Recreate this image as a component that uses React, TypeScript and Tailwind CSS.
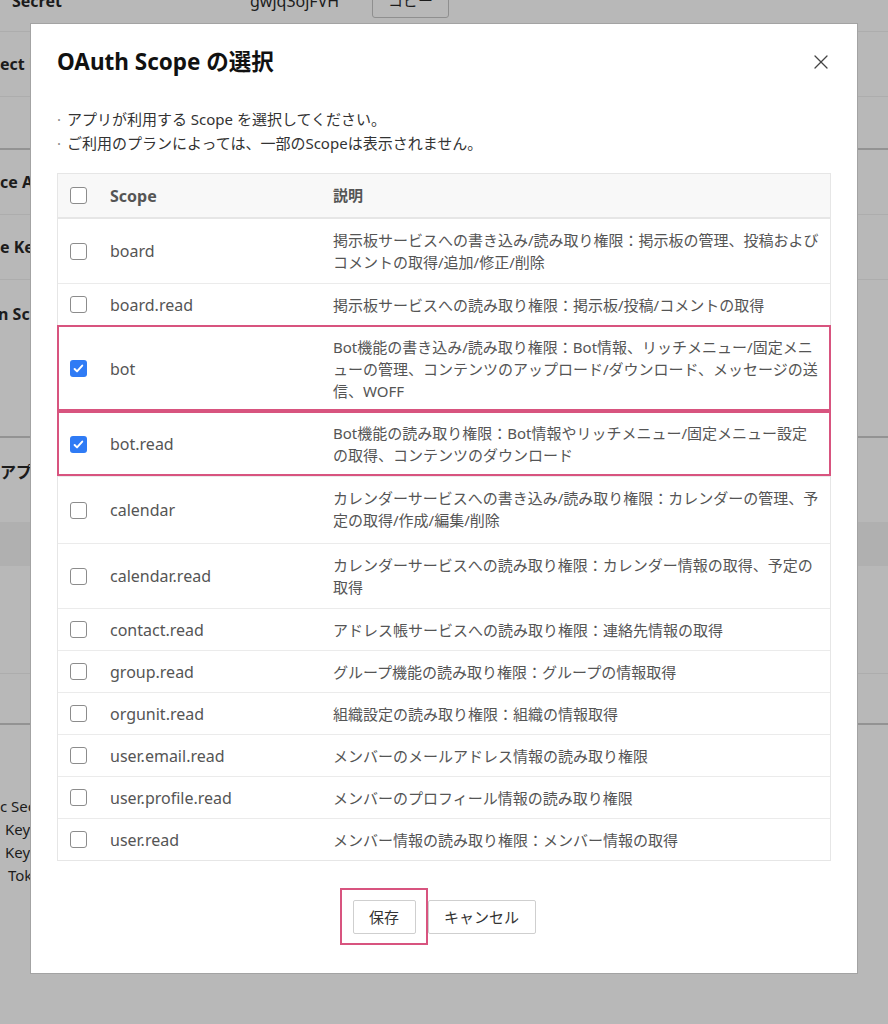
import { X } from 'lucide-react';

type Scope = { name: string; lines: string[]; checked?: boolean };

const SCOPES: Scope[] = [
  { name: 'board', lines: ['掲示板サービスへの書き込み/読み取り権限：掲示板の管理、投稿および', 'コメントの取得/追加/修正/削除'] },
  { name: 'board.read', lines: ['掲示板サービスへの読み取り権限：掲示板/投稿/コメントの取得'] },
  {
    name: 'bot',
    checked: true,
    lines: [
      'Bot機能の書き込み/読み取り権限：Bot情報、リッチメニュー/固定メニ',
      'ューの管理、コンテンツのアップロード/ダウンロード、メッセージの送',
      '信、WOFF',
    ],
  },
  { name: 'bot.read', checked: true, lines: ['Bot機能の読み取り権限：Bot情報やリッチメニュー/固定メニュー設定', 'の取得、コンテンツのダウンロード'] },
  { name: 'calendar', lines: ['カレンダーサービスへの書き込み/読み取り権限：カレンダーの管理、予', '定の取得/作成/編集/削除'] },
  { name: 'calendar.read', lines: ['カレンダーサービスへの読み取り権限：カレンダー情報の取得、予定の', '取得'] },
  { name: 'contact.read', lines: ['アドレス帳サービスへの読み取り権限：連絡先情報の取得'] },
  { name: 'group.read', lines: ['グループ機能の読み取り権限：グループの情報取得'] },
  { name: 'orgunit.read', lines: ['組織設定の読み取り権限：組織の情報取得'] },
  { name: 'user.email.read', lines: ['メンバーのメールアドレス情報の読み取り権限'] },
  { name: 'user.profile.read', lines: ['メンバーのプロフィール情報の読み取り権限'] },
  { name: 'user.read', lines: ['メンバー情報の読み取り権限：メンバー情報の取得'] },
];

function Checkbox({ checked }: { checked?: boolean }) {
  if (checked) {
    return (
      <span className="flex h-[17px] w-[17px] items-center justify-center rounded-[3px] bg-[#2f7bf5]">
        <svg viewBox="0 0 16 16" className="h-[13px] w-[13px]">
          <path d="M3.2 8.6l3 3 6.4-7.2" fill="none" stroke="#fff" strokeWidth="2.4" strokeLinecap="round" strokeLinejoin="round" />
        </svg>
      </span>
    );
  }
  return <span className="block h-[17px] w-[17px] rounded-[3px] border border-[#8c8c8c] bg-white" />;
}

// greyed page behind the dialog
function BackgroundPage() {
  return (
    <div className="-mt-[30px] text-[16px] text-[#1c1c1c]">
      <div className="flex h-[62px] items-center border-b border-[#adadad]">
        <div className="w-[250px] pl-[12px] font-bold">Secret</div>
        <div className="w-[122px]">gwjq3ojFVH</div>
        <div className="flex h-[34px] w-[77px] items-center justify-center rounded-[3px] border border-[#8f8f8f] text-[15px]">コピー</div>
      </div>
      <div className="flex h-[65px] items-center border-b border-[#adadad] font-bold">ect URL</div>
      <div className="h-[53px] border-b-2 border-[#939393]" />
      <div className="flex h-[65px] items-center border-b border-[#adadad] font-bold">ce Account</div>
      <div className="flex h-[65px] items-center border-b border-[#adadad] font-bold">e Key</div>
      <div className="h-[158px] border-b-2 border-[#939393] pt-[22px] font-bold">
        <span className="-ml-[2px]">n Scopes</span>
      </div>
      <div className="h-[287px] border-b-2 border-[#939393]">
        <div className="pt-[22px] font-bold">アプリ</div>
        <div className="mt-[38px] h-[44px] bg-[#b0b0b0]" />
        <div className="h-[108px] border-b border-[#adadad]" />
      </div>
      <div className="pt-[70px] text-[15px] leading-[23px]">
        <div>c Secret</div>
        <div className="pl-[5px]">Key ID</div>
        <div className="pl-[5px]">Key File</div>
        <div className="pl-[8px]">Token</div>
      </div>
    </div>
  );
}

export default function App() {
  return (
    <div
      className="relative h-[1024px] w-full overflow-hidden bg-[#b8b8b8]"
      style={{ fontFamily: '"Noto Sans", "Noto Sans CJK JP", sans-serif' }}
    >
      <BackgroundPage />

      {/* Dialog */}
      <div className="absolute left-[30px] top-[23px] w-[828px] border border-[#a3a3a3] bg-white px-[26px] pb-[39px] pt-[23px]">
        <div className="flex items-center justify-between">
          <h2 className="text-[22.5px] font-bold leading-[30px] text-[#111]">OAuth Scope の選択</h2>
          <button className="-mr-[2px] text-[#444]">
            <X size={24} strokeWidth={1.3} />
          </button>
        </div>

        <ul className="mt-[30px] text-[15px] leading-[24px] text-[#333]">
          <li>
            <span className="mr-[2px] text-[#888]">·</span> アプリが利用する Scope を選択してください。
          </li>
          <li>
            <span className="mr-[2px] text-[#888]">·</span> ご利用のプランによっては、一部のScopeは表示されません。
          </li>
        </ul>

        {/* Scope table */}
        <div className="mt-[18px] border border-[#e6e6e6]">
          <div className="flex h-[45px] items-center border-b-2 border-[#e6e6e6] bg-[#f8f8f8] font-bold text-[#555]">
            <div className="w-[52px] pl-[12px]">
              <Checkbox />
            </div>
            <div className="w-[223px] text-[16px]">Scope</div>
            <div className="text-[15px]">説明</div>
          </div>

          {SCOPES.map((s, i) => (
            <div
              key={s.name}
              className={`relative flex items-center ${i < SCOPES.length - 1 ? 'border-b border-[#ebebeb]' : ''}`}
            >
              <div className="w-[52px] pl-[12px]">
                <Checkbox checked={s.checked} />
              </div>
              <div className="w-[223px] text-[16px] text-[#555]">{s.name}</div>
              <div
                className={`flex-1 pt-[10px] text-[15px] leading-[22px] text-[#555] ${
                  s.name === 'calendar' ? 'pb-[12px]' : s.lines.length === 2 ? 'pb-[10px]' : 'pb-[9px]'
                }`}
              >
                {s.lines.map((l) => (
                  <div key={l} className="whitespace-nowrap">
                    {l}
                  </div>
                ))}
              </div>
              {s.checked && (
                <span className="pointer-events-none absolute -left-px -right-px -top-px bottom-0 z-10 border-2 border-[#d8547f]" />
              )}
            </div>
          ))}
        </div>

        <div className="mt-[39px] flex justify-center gap-[12px]">
          <div className="relative">
            <button className="block h-[34px] w-[63px] rounded-[2px] border border-[#cfcfcf] bg-white text-[15px] text-[#333]">
              保存
            </button>
            <span className="pointer-events-none absolute -bottom-[11px] -left-[13px] -right-[12px] -top-[12px] border-2 border-[#d8547f]" />
          </div>
          <button className="block h-[34px] w-[108px] rounded-[2px] border border-[#cfcfcf] bg-white text-[15px] text-[#333]">
            キャンセル
          </button>
        </div>
      </div>
    </div>
  );
}
